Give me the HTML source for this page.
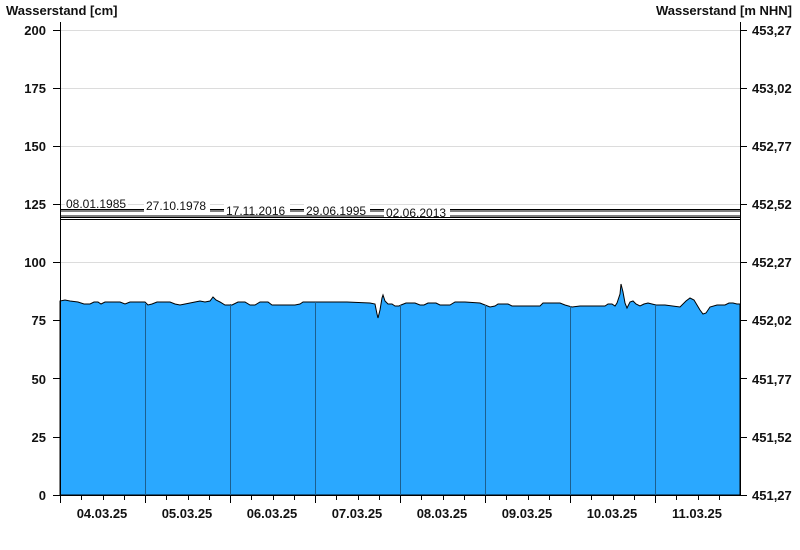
<!DOCTYPE html>
<html><head><meta charset="utf-8">
<style>
html,body{margin:0;padding:0;background:#fff;}
svg{display:block;font-family:"Liberation Sans",Arial,sans-serif;}
.b{font-weight:bold;font-size:13px;fill:#111;}
.s{font-size:12px;fill:#111;}
</style></head><body>
<svg width="800" height="550" viewBox="0 0 800 550" xmlns="http://www.w3.org/2000/svg">
<rect width="800" height="550" fill="#fff"/>
<text class="b" x="6" y="15">Wasserstand [cm]</text>
<text class="b" x="792" y="15" text-anchor="end">Wasserstand [m NHN]</text>
<g stroke="#dcdcdc" stroke-width="1">
<line x1="60" y1="30.5" x2="740" y2="30.5"/>
<line x1="60" y1="88.5" x2="740" y2="88.5"/>
<line x1="60" y1="146.5" x2="740" y2="146.5"/>
<line x1="60" y1="204.5" x2="740" y2="204.5"/>
<line x1="60" y1="262.5" x2="740" y2="262.5"/>
</g>
<polygon fill="#2aa8ff" stroke="#000" stroke-width="1" points="60,495 60,301 65,300 70,301 78,302 84,304 90,304 94,302 98,302 101,304 105,302 110,302 120,302 125,304 130,302 145,302 148,305 152,304 157,302 170,302 175,304 180,305 185,304 195,302 200,301 205,302 210,301 213,297 216,300 220,302 225,305 232,305 238,302 245,302 250,305 255,305 260,302 268,302 272,305 295,305 300,304 303,302 340,302 347,302 370,303 375,304 377,314 378,318 380,310 382,298 383,295 385,301 388,304 392,304 395,306 399,306 401,305 406,303 415,303 420,305 424,305 428,303 436,303 440,305 450,305 455,302 460,302 465,302 480,303 485,305 490,307 495,306 498,304 508,304 512,306 540,306 543,303 550,303 560,303 565,305 572,307 580,306 605,306 608,304 612,304 615,306 617,303 620,294 621,284 623,292 625,303 627,308 630,302 633,301 636,304 640,306 644,304 648,303 652,304 656,305 665,305 680,307 686,301 690,298 694,300 700,310 703,314 706,313 710,307 717,305 725,305 729,303 733,303 737,304 740,304 740,495"/>
<g stroke="#1c5f8f" stroke-width="1">
<line x1="145.5" y1="304" x2="145.5" y2="495"/>
<line x1="230.5" y1="304" x2="230.5" y2="495"/>
<line x1="315.5" y1="302" x2="315.5" y2="495"/>
<line x1="400.5" y1="305" x2="400.5" y2="495"/>
<line x1="485.5" y1="305" x2="485.5" y2="495"/>
<line x1="570.5" y1="306" x2="570.5" y2="495"/>
<line x1="655.5" y1="304" x2="655.5" y2="495"/>
</g>
<g stroke="#000" stroke-width="1">
<line x1="60" y1="209.5" x2="740" y2="209.5"/>
<line x1="60" y1="211" x2="740" y2="211"/>
<line x1="60" y1="216" x2="740" y2="216"/>
<line x1="60" y1="217.5" x2="740" y2="217.5"/>
<line x1="60" y1="219.5" x2="740" y2="219.5"/>
</g>
<g fill="#fff">
<rect x="65" y="197" width="63" height="11"/>
<rect x="144" y="199" width="66" height="13.5"/>
<rect x="224" y="203" width="66" height="12.5"/>
<rect x="304" y="203" width="66" height="12.5"/>
<rect x="384" y="205" width="66" height="12"/>
</g>
<text class="s" x="66" y="208">08.01.1985</text>
<text class="s" x="146" y="210">27.10.1978</text>
<text class="s" x="226" y="215">17.11.2016</text>
<text class="s" x="306" y="215">29.06.1995</text>
<text class="s" x="386" y="217">02.06.2013</text>
<g stroke="#000" stroke-width="1">
<line x1="60.5" y1="22" x2="60.5" y2="503"/>
<line x1="740.5" y1="22" x2="740.5" y2="495"/>
<line x1="53" y1="495.5" x2="740" y2="495.5"/>
<line x1="53" y1="30.5" x2="60" y2="30.5"/><line x1="53" y1="88.5" x2="60" y2="88.5"/><line x1="53" y1="146.5" x2="60" y2="146.5"/><line x1="53" y1="204.5" x2="60" y2="204.5"/><line x1="53" y1="262.5" x2="60" y2="262.5"/><line x1="53" y1="320.5" x2="60" y2="320.5"/><line x1="53" y1="378.5" x2="60" y2="378.5"/><line x1="53" y1="437.5" x2="60" y2="437.5"/>
<line x1="740" y1="30.5" x2="747" y2="30.5"/><line x1="740" y1="88.5" x2="747" y2="88.5"/><line x1="740" y1="146.5" x2="747" y2="146.5"/><line x1="740" y1="204.5" x2="747" y2="204.5"/><line x1="740" y1="262.5" x2="747" y2="262.5"/><line x1="740" y1="320.5" x2="747" y2="320.5"/><line x1="740" y1="378.5" x2="747" y2="378.5"/><line x1="740" y1="437.5" x2="747" y2="437.5"/><line x1="740" y1="495.5" x2="747" y2="495.5"/>
<line x1="145.5" y1="495" x2="145.5" y2="503"/><line x1="230.5" y1="495" x2="230.5" y2="503"/><line x1="315.5" y1="495" x2="315.5" y2="503"/><line x1="400.5" y1="495" x2="400.5" y2="503"/><line x1="485.5" y1="495" x2="485.5" y2="503"/><line x1="570.5" y1="495" x2="570.5" y2="503"/><line x1="655.5" y1="495" x2="655.5" y2="503"/>
<line x1="81.5" y1="495" x2="81.5" y2="500"/><line x1="103.5" y1="495" x2="103.5" y2="500"/><line x1="124.5" y1="495" x2="124.5" y2="500"/>
<line x1="166.5" y1="495" x2="166.5" y2="500"/><line x1="188.5" y1="495" x2="188.5" y2="500"/><line x1="209.5" y1="495" x2="209.5" y2="500"/>
<line x1="251.5" y1="495" x2="251.5" y2="500"/><line x1="273.5" y1="495" x2="273.5" y2="500"/><line x1="294.5" y1="495" x2="294.5" y2="500"/>
<line x1="336.5" y1="495" x2="336.5" y2="500"/><line x1="358.5" y1="495" x2="358.5" y2="500"/><line x1="379.5" y1="495" x2="379.5" y2="500"/>
<line x1="421.5" y1="495" x2="421.5" y2="500"/><line x1="443.5" y1="495" x2="443.5" y2="500"/><line x1="464.5" y1="495" x2="464.5" y2="500"/>
<line x1="506.5" y1="495" x2="506.5" y2="500"/><line x1="528.5" y1="495" x2="528.5" y2="500"/><line x1="549.5" y1="495" x2="549.5" y2="500"/>
<line x1="591.5" y1="495" x2="591.5" y2="500"/><line x1="613.5" y1="495" x2="613.5" y2="500"/><line x1="634.5" y1="495" x2="634.5" y2="500"/>
<line x1="676.5" y1="495" x2="676.5" y2="500"/><line x1="698.5" y1="495" x2="698.5" y2="500"/><line x1="719.5" y1="495" x2="719.5" y2="500"/>
</g>
<text class="b" x="46" y="35" text-anchor="end">200</text><text class="b" x="46" y="93" text-anchor="end">175</text><text class="b" x="46" y="151" text-anchor="end">150</text><text class="b" x="46" y="209" text-anchor="end">125</text><text class="b" x="46" y="267" text-anchor="end">100</text><text class="b" x="46" y="325" text-anchor="end">75</text><text class="b" x="46" y="384" text-anchor="end">50</text><text class="b" x="46" y="442" text-anchor="end">25</text><text class="b" x="46" y="500" text-anchor="end">0</text>
<text class="b" x="752" y="35">453,27</text><text class="b" x="752" y="93">453,02</text><text class="b" x="752" y="151">452,77</text><text class="b" x="752" y="209">452,52</text><text class="b" x="752" y="267">452,27</text><text class="b" x="752" y="325">452,02</text><text class="b" x="752" y="384">451,77</text><text class="b" x="752" y="442">451,52</text><text class="b" x="752" y="500">451,27</text>
<text class="b" x="102" y="518" text-anchor="middle">04.03.25</text>
<text class="b" x="187" y="518" text-anchor="middle">05.03.25</text>
<text class="b" x="272" y="518" text-anchor="middle">06.03.25</text>
<text class="b" x="357" y="518" text-anchor="middle">07.03.25</text>
<text class="b" x="442" y="518" text-anchor="middle">08.03.25</text>
<text class="b" x="527" y="518" text-anchor="middle">09.03.25</text>
<text class="b" x="612" y="518" text-anchor="middle">10.03.25</text>
<text class="b" x="697" y="518" text-anchor="middle">11.03.25</text>
</svg>
</body></html>
